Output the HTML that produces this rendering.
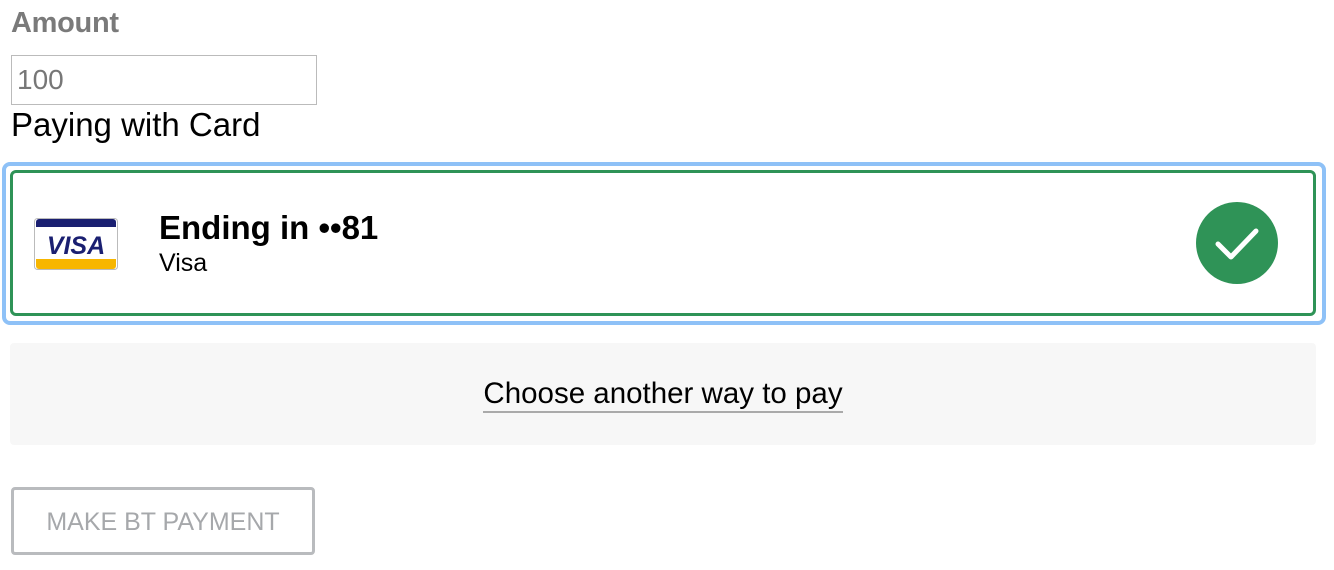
<!DOCTYPE html>
<html><head><style>
body{margin:0;width:1334px;height:570px;background:#fff;font-family:"Liberation Sans",sans-serif;position:relative;overflow:hidden}
.a{position:absolute}
</style></head><body>
<div class="a" style="left:11px;top:7px;font-size:29px;font-weight:bold;color:#7a7a7a;letter-spacing:-0.3px">Amount</div>
<div class="a" style="left:11px;top:55px;width:304px;height:48px;border:1px solid #bbb;"></div>
<div class="a" style="left:17px;top:64px;font-size:28px;color:#777">100</div>
<div class="a" style="left:11px;top:106px;font-size:33px;color:#000">Paying with Card</div>
<div class="a" style="left:2px;top:162px;width:1316px;height:155px;border:4px solid #8ec1f7;border-radius:8px"></div>
<div class="a" style="left:10px;top:170px;width:1300px;height:140px;border:3px solid #2f9357;border-radius:6px;background:#fff"></div>
<svg class="a" style="left:34px;top:218px" width="84" height="52" viewBox="0 0 84 52">
<rect x="0.5" y="0.5" width="83" height="51" rx="3" fill="#fff" stroke="#bbb"/>
<path d="M2 4a3 3 0 0 1 3-3h74a3 3 0 0 1 3 3v5H2z" fill="#1a1f71"/>
<path d="M2 41h80v7a3 3 0 0 1-3 3H5a3 3 0 0 1-3-3z" fill="#f7b600"/>
<text x="42" y="36" text-anchor="middle" font-family="Liberation Sans" font-weight="bold" font-style="italic" font-size="25" fill="#1a1f71">VISA</text>
</svg>
<div class="a" style="left:159px;top:209px;font-size:33px;font-weight:bold;color:#000">Ending in ••81</div>
<div class="a" style="left:159px;top:249px;font-size:25px;color:#000">Visa</div>
<svg class="a" style="left:1196px;top:202px" width="82" height="82"><circle cx="41" cy="41" r="41" fill="#2f9357"/><path d="M22 42l13 13 25-26" fill="none" stroke="#fff" stroke-width="5" stroke-linecap="round" stroke-linejoin="round"/></svg>
<div class="a" style="left:10px;top:343px;width:1306px;height:102px;background:#f7f7f7;border-radius:4px"></div>
<div class="a" style="left:0;width:1326px;top:377px;text-align:center;font-size:29.5px;color:#000"><span style="border-bottom:2px solid #aaa;padding-bottom:1px">Choose another way to pay</span></div>
<div class="a" style="left:11px;top:487px;width:298px;height:62px;border:3px solid #b9bbbe;border-radius:4px;background:#fff"></div>
<div class="a" style="left:11px;width:304px;top:508px;text-align:center;font-size:25px;color:#a6a8ab">MAKE BT PAYMENT</div>
</body></html>
